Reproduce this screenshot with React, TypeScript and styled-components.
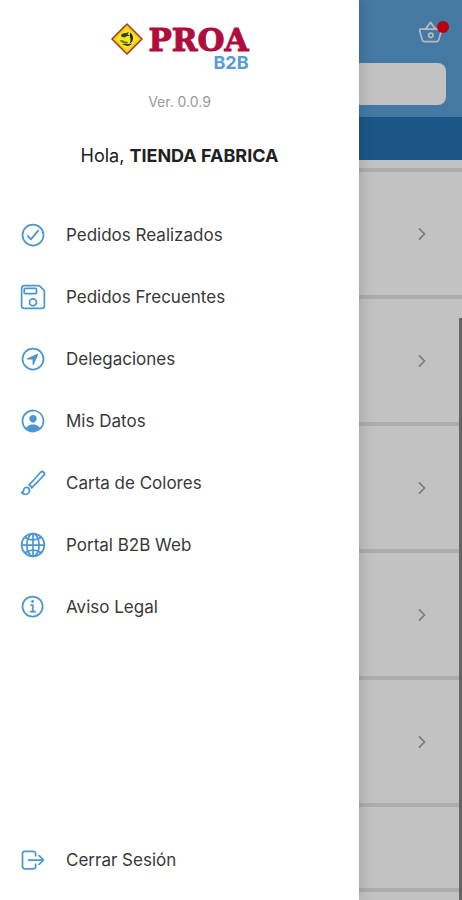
import React from "react";
import styled, { createGlobalStyle } from "styled-components";
import type { IconType } from "react-icons";
import {
  IoBasketOutline,
  IoBrushOutline,
  IoCheckmarkCircleOutline,
  IoChevronForward,
  IoGlobeOutline,
  IoInformationCircleOutline,
  IoLogOutOutline,
  IoNavigateCircleOutline,
  IoPersonCircleOutline,
  IoSaveOutline,
} from "react-icons/io5";

const GlobalStyle = createGlobalStyle`
  *, *::before, *::after { box-sizing: border-box; }
  html, body, #root { height: 100%; }
  body {
    margin: 0;
    background: #fff;
    color: #2b2b2b;
    font-family: Inter, "Liberation Sans", sans-serif;
  }
  ul { list-style: none; margin: 0; padding: 0; }
`;

const Screen = styled.div`
  position: relative;
  height: 100%;
  overflow: hidden;
`;

const Page = styled.main`
  height: 100%;
  display: flex;
  flex-direction: column;
`;

const Header = styled.header`
  display: flex;
  flex-direction: column;
  gap: 13px;
  padding: 15px 16px 12px;
  background: #5a9fd8;
`;

const HeaderTop = styled.div`
  display: flex;
  justify-content: flex-end;
`;

const BasketButton = styled.button`
  position: relative;
  display: flex;
  padding: 4px 2px;
  border: 0;
  background: none;
  color: #f4f4f4;
  font-size: 27px;
`;

const BasketDot = styled.span`
  position: absolute;
  top: 6px;
  right: -3px;
  width: 12px;
  height: 12px;
  border-radius: 50%;
  background: #f00014;
`;

const SearchInput = styled.input`
  width: 100%;
  height: 42px;
  padding: 0 16px;
  border: 0;
  border-radius: 8px;
  background: #fff;
  font: inherit;
`;

const Banner = styled.div`
  flex: none;
  height: 43px;
  background: #2672b2;
`;

const OrderList = styled.ul`
  flex: 1;
  min-height: 0;
  overflow: hidden;
  padding-top: 8px;
`;

const OrderRow = styled.li<{ $compact?: boolean }>`
  display: flex;
  align-items: center;
  justify-content: flex-end;
  height: ${(p) => (p.$compact ? 85 : 127)}px;
  padding-right: 31px;
  border-top: 4px solid #e4e4e4;
  color: #a0a0a0;
  font-size: 18px;
`;

const ScrollThumb = styled.span`
  position: absolute;
  top: 318px;
  right: 0;
  bottom: 0;
  width: 3px;
  background: #858585;
`;

const Scrim = styled.div`
  position: absolute;
  inset: 0;
  background: rgba(0, 0, 0, 0.24);
`;

const Drawer = styled.aside`
  position: absolute;
  inset: 0 auto 0 0;
  width: calc(100% - 103px);
  display: flex;
  flex-direction: column;
  padding-bottom: 9px;
  background: #fff;
  box-shadow: 0 0 14px rgba(0, 0, 0, 0.2);
`;

const Brand = styled.div`
  display: flex;
  justify-content: center;
  gap: 4px;
  padding-top: 22px;
`;

const Emblem = styled.svg`
  width: 34px;
  height: 34px;
`;

const BrandText = styled.div`
  display: flex;
  flex-direction: column;
  align-items: flex-end;
`;

const BrandName = styled.span`
  color: #b00c3c;
  font: bold 31px/36px "DejaVu Serif", serif;
  -webkit-text-stroke: 1px #b00c3c;
`;

const BrandTag = styled.span`
  color: #589cd1;
  font-size: 18px;
  font-weight: 700;
  line-height: 10px;
`;

const Version = styled.p`
  margin: 26px 0 0;
  color: #999;
  font-size: 14px;
  line-height: 16px;
  text-align: center;
`;

const Greeting = styled.p`
  margin: 36px 0 0;
  color: #202020;
  font-size: 18px;
  line-height: 20px;
  text-align: center;
`;

const Menu = styled.nav`
  flex: 1;
  padding-top: 38px;
`;

const MenuLink = styled.a`
  display: flex;
  align-items: center;
  gap: 19px;
  height: 62px;
  padding-left: 19px;
  color: #383838;
  font-size: 17px;
  text-decoration: none;

  svg {
    flex: none;
    color: #4d97d0;
    font-size: 28px;
  }
`;

const LogoutButton = styled(MenuLink).attrs({ as: "button" })`
  width: 100%;
  border: 0;
  background: none;
  font-family: inherit;
`;

const MENU: { label: string; icon: IconType }[] = [
  { label: "Pedidos Realizados", icon: IoCheckmarkCircleOutline },
  { label: "Pedidos Frecuentes", icon: IoSaveOutline },
  { label: "Delegaciones", icon: IoNavigateCircleOutline },
  { label: "Mis Datos", icon: IoPersonCircleOutline },
  { label: "Carta de Colores", icon: IoBrushOutline },
  { label: "Portal B2B Web", icon: IoGlobeOutline },
  { label: "Aviso Legal", icon: IoInformationCircleOutline },
];

function ProaEmblem() {
  return (
    <Emblem viewBox="0 0 34 34" aria-hidden="true">
      <path d="M17 2 32 17 17 32 2 17Z" fill="#f6e51c" stroke="#a83a2c" strokeWidth="1.6" strokeLinejoin="round" />
      <path d="M17 4.5 29.5 17 17 29.5 4.5 17Z" fill="none" stroke="#e2ac20" strokeWidth="0.8" />
      <path d="M11 13.5c1-2 3-2.600 5-2.500l3-1-1.500 2.500 3 1-4 .8-2 1.200-3-.8Z" fill="#35401c" />
      <path d="M20 10.500c3 2 4 6 1.800 9.500l-2.300 1.500c1.500-3 1.500-4 .5-6.500Z" fill="#182217" />
      <path d="M9.500 18.500c2-.6 4-.2 5.500.9l3.500.6-2 1.500-4-.4Z" fill="#6f7524" />
      <path d="M12 22.500c3-1.700 7 .6 10-1.200-1.500 2.700-3.500 3-5.500 2.500Z" fill="#35401c" />
    </Emblem>
  );
}

export default function App() {
  return (
    <>
      <GlobalStyle />
      <Screen>
        <Page>
          <Header>
            <HeaderTop>
              <BasketButton type="button" aria-label="Cesta">
                <IoBasketOutline />
                <BasketDot />
              </BasketButton>
            </HeaderTop>
            <SearchInput type="search" aria-label="Buscar" />
          </Header>
          <Banner />
          <OrderList>
            {[1, 2, 3, 4, 5].map((id) => (
              <OrderRow key={id}>
                <IoChevronForward />
              </OrderRow>
            ))}
            <OrderRow $compact />
            <OrderRow />
          </OrderList>
        </Page>
        <ScrollThumb />
        <Scrim />
        <Drawer>
          <Brand>
            <ProaEmblem />
            <BrandText>
              <BrandName>PROA</BrandName>
              <BrandTag>B2B</BrandTag>
            </BrandText>
          </Brand>
          <Version>Ver. 0.0.9</Version>
          <Greeting>
            Hola, <strong>TIENDA FABRICA</strong>
          </Greeting>
          <Menu aria-label="Menú">
            <ul>
              {MENU.map(({ label, icon: Icon }) => (
                <li key={label}>
                  <MenuLink href="#">
                    <Icon />
                    {label}
                  </MenuLink>
                </li>
              ))}
            </ul>
          </Menu>
          <LogoutButton>
            <IoLogOutOutline />
            Cerrar Sesión
          </LogoutButton>
        </Drawer>
      </Screen>
    </>
  );
}
